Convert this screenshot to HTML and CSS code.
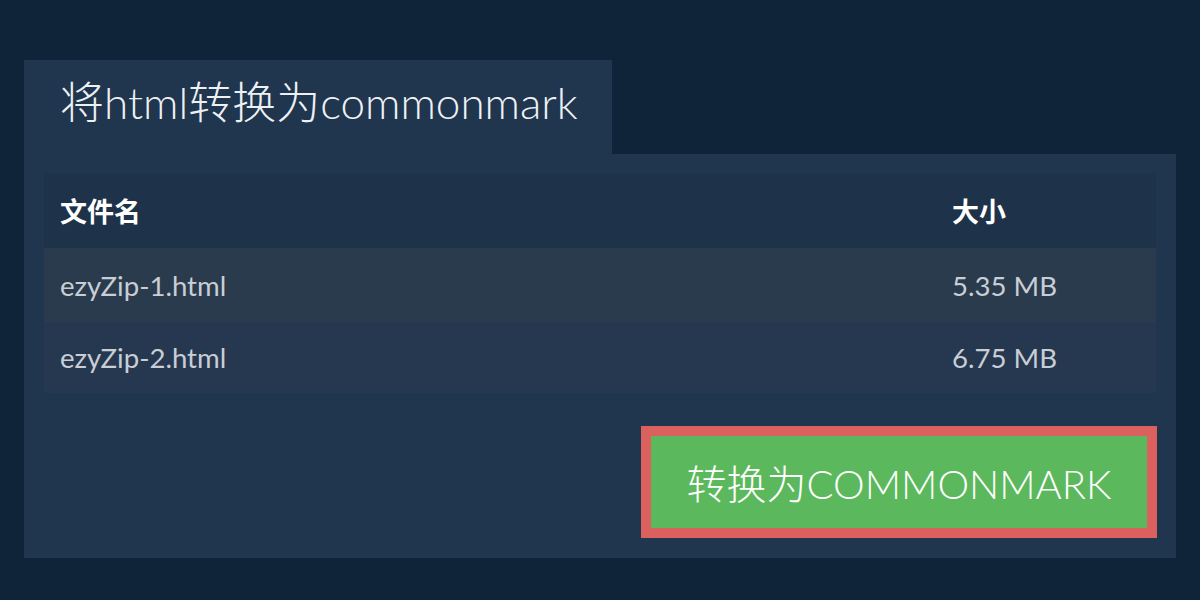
FILE: index.html
```html
<!DOCTYPE html>
<html lang="zh">
<head>
<meta charset="utf-8">
<link rel="stylesheet" href="styles.css">
</head>
<body>
<div class="wrap">
  <div class="tab"><h1 class="title">将html转换为commonmark</h1></div>
  <div class="panel">
    <div class="table">
      <div class="row head"><div class="c1">文件名</div><div class="c2">大小</div></div>
      <div class="row odd"><div class="c1">ezyZip-1.html</div><div class="c2">5.35 MB</div></div>
      <div class="row even"><div class="c1">ezyZip-2.html</div><div class="c2">6.75 MB</div></div>
    </div>
    <div class="actions">
      <button class="btn">转换为COMMONMARK</button>
    </div>
  </div>
</div>
</body>
</html>
```
FILE: styles.css
```css
html, body {
  margin: 0;
  padding: 0;
  background: #0f2339;
  font-family: Lato, "Noto Sans CJK SC", sans-serif;
}
.wrap {
  padding: 60px 24px 0 24px;
}
.tab {
  width: 588px;
  height: 94px;
  background: #20354e;
  box-sizing: border-box;
  padding: 0 36px;
  display: flex;
  align-items: center;
}
.title {
  margin: 0;
  font-family: "Lato Light", Lato, "Noto Sans CJK SC Light", "Noto Sans CJK SC", sans-serif;
  font-size: 44px;
  font-weight: 300;
  color: #eef1f4;
  line-height: 1;
  white-space: nowrap;
  position: relative;
  top: -5px;
}
.panel {
  background: #20354e;
  padding: 19px 20px 20px 20px;
}
.table {
  display: flex;
  flex-direction: column;
}
.row {
  display: grid;
  grid-template-columns: 892px 1fr;
  align-items: center;
}
.row > div {
  padding: 0 16px;
  white-space: nowrap;
}
.head {
  height: 75px;
  background: #1e3249;
  color: #ffffff;
  font-weight: 700;
  font-size: 27px;
}
.odd {
  height: 74px;
  background: #2a3b4d;
}
.even {
  height: 71px;
  background: #253850;
}
.odd, .even {
  color: #c9ced5;
  font-size: 27.6px;
}
.actions {
  display: flex;
  justify-content: flex-end;
  padding-top: 33px;
  margin-right: -1px;
}
.btn {
  width: 516px;
  height: 112px;
  border: 10px solid #dc615e;
  background: #5cb85c;
  color: #ffffff;
  font-family: "Lato Light", Lato, "Noto Sans CJK SC Light", "Noto Sans CJK SC", sans-serif;
  font-weight: 300;
  font-size: 40px;
  padding: 0;
  white-space: nowrap;
}
```
